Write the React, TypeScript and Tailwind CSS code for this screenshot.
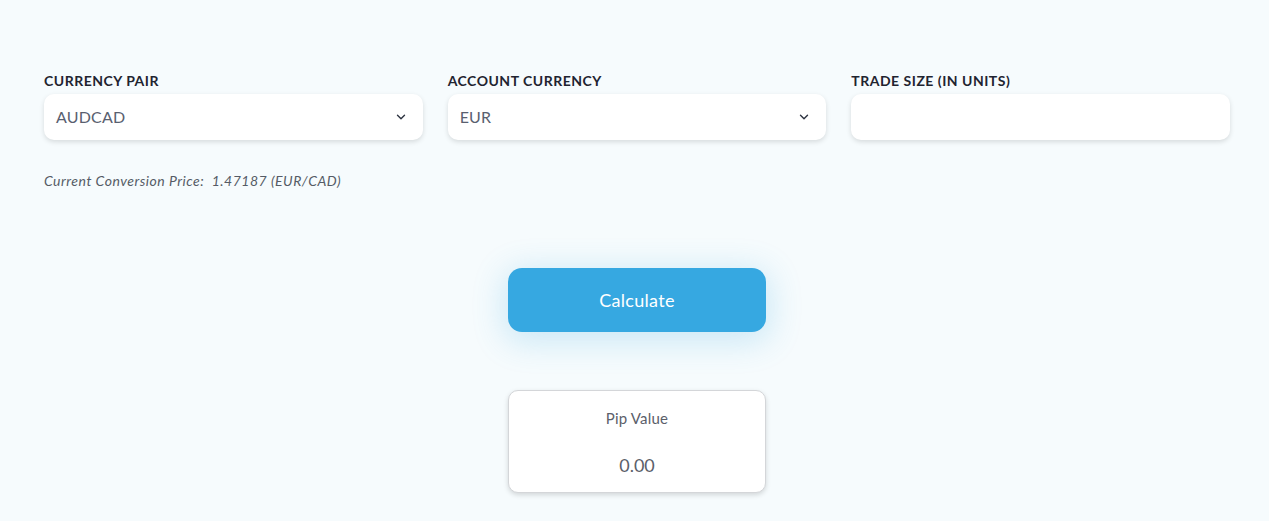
import React from "react";

function Chevron() {
  return (
    <svg width="14" height="14" viewBox="0 0 24 24" fill="none" stroke="#2d3340" strokeWidth="2.4" strokeLinecap="round" strokeLinejoin="round">
      <path d="M6 9l6 6 6-6" />
    </svg>
  );
}

function Field({ label, value, select }: { label: string; value?: string; select?: boolean }) {
  return (
    <div className="flex flex-col">
      <div className="text-[14px] font-bold text-[#1f2430] tracking-[0.5px] leading-[18px] mb-[4px] pt-[4px]">{label}</div>
      <div className="h-[46px] bg-white rounded-[10px] shadow-[0_2px_5px_rgba(0,0,0,0.13)] flex items-center justify-between pl-[12px] pr-[15px]">
        <span className="text-[16px] text-[#596070] tracking-[0.2px]">{value}</span>
        {select && <Chevron />}
      </div>
    </div>
  );
}

export default function App() {
  return (
    <div className="min-h-[521px] w-full bg-[#f6fbfd] text-[#333]" style={{ fontFamily: "Lato, 'Noto Sans', sans-serif" }}>
      <div className="pl-[44px] pr-[39px] pt-[68px]">
        <div className="grid grid-cols-3 gap-x-[25px]">
          <Field label="CURRENCY PAIR" value="AUDCAD" select />
          <Field label="ACCOUNT CURRENCY" value="EUR" select />
          <Field label="TRADE SIZE (IN UNITS)" />
        </div>
        <div className="mt-[31px] text-[14px] italic text-[#555b66] leading-[20px] tracking-[0.5px]">
          Current Conversion Price:&nbsp; 1.47187 (EUR/CAD)
        </div>
        <div className="flex flex-col items-center mt-[77px]">
          <button className="w-[258px] h-[64px] rounded-[14px] bg-[#36a8e1] text-white text-[18px] tracking-[0.3px] shadow-[0_6px_32px_4px_rgba(54,168,225,0.22)]">
            Calculate
          </button>
          <div className="mt-[58px] w-[258px] h-[103px] bg-white rounded-[10px] border border-[#d4d6d9] shadow-[0_2px_5px_rgba(0,0,0,0.15)] flex flex-col items-center">
            <div className="mt-[17px] text-[15px] text-[#5b606a] leading-[20px] tracking-[0.2px]">Pip Value</div>
            <div className="mt-[25px] text-[18px] text-[#5b606a] leading-[24px]">0.00</div>
          </div>
        </div>
      </div>
    </div>
  );
}
